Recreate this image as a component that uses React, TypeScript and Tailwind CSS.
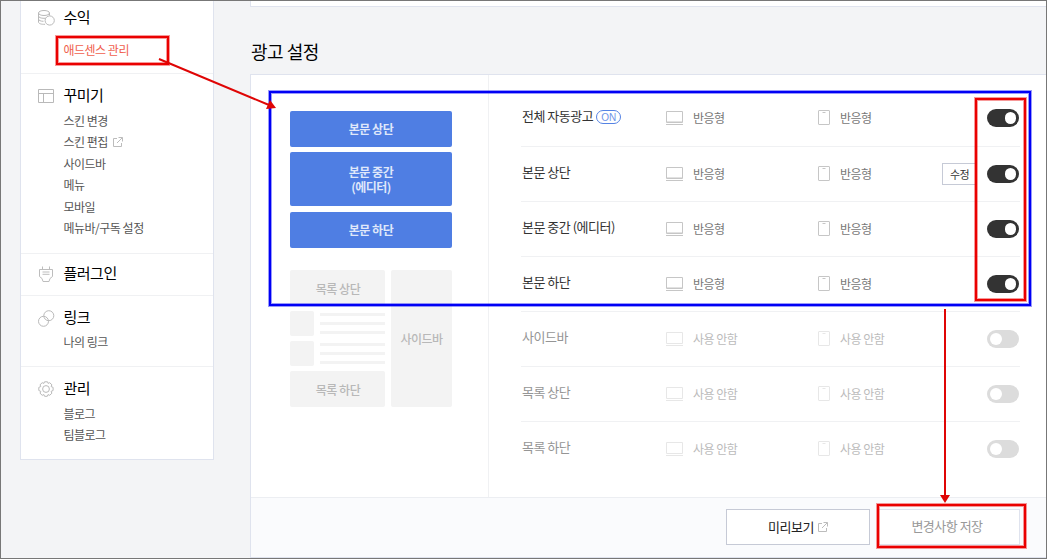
import type { ReactNode } from "react";
import { clsx } from "clsx";

type MenuSection = {
  title: string;
  icon: ReactNode;
  className: string;
  listClassName?: string;
  items: { label: string; active?: boolean; external?: boolean }[];
};

function ExternalIcon() {
  return (
    <svg width="10" height="10" viewBox="0 0 10 10" fill="none" stroke="#bcbcbc">
      <path d="M4 1.5H.5v8h8V6M5.5.5h4v4M9.3.7 4 6" />
    </svg>
  );
}

function CoinsIcon() {
  return (
    <svg width="17" height="16" viewBox="0 0 17 16" fill="none" stroke="#b9b9b9">
      <ellipse cx="6" cy="3" rx="5.5" ry="2.5" />
      <path d="M.5 3v3c0 1.4 2.4 2.3 5.5 2.3 1 0 2-.1 2.8-.3M11.5 3v2.5M.5 6v3c0 1.4 2.2 2.3 5 2.3M.5 9v3c0 1.5 2.6 2.5 6.500 2.3" />
      <circle cx="11.7" cy="10.5" r="4.6" fill="#fff" />
    </svg>
  );
}

function LayoutIcon() {
  return (
    <svg width="17" height="15" viewBox="0 0 17 15" fill="none" stroke="#b9b9b9">
      <path d="M.5.5h15v13H.5zM.5 4.5h15M5.5 4.5v9" />
    </svg>
  );
}

function PlugIcon() {
  return (
    <svg width="17" height="17" viewBox="0 0 17 17" fill="none" stroke="#bdbdbd">
      <path d="M1.500 3.500h13v7l-2.500 2-1 3H5l-1-3-2.500-2zM4.500.5v3M11.500.5v3M4.500 6h7M4.500 8.300h7" />
    </svg>
  );
}

function LinkIcon() {
  return (
    <svg width="17" height="17" viewBox="0 0 17 17" fill="none" stroke="#b9b9b9">
      <circle cx="10.8" cy="5.7" r="5" />
      <circle cx="5.5" cy="11.3" r="5" />
    </svg>
  );
}

function GearIcon() {
  return (
    <svg width="17" height="17" viewBox="0 0 17 17" fill="none" stroke="#b9b9b9">
      <path
        strokeLinejoin="round"
        d="M6.5.8h3l.6 1.600 1.600-.7 2.200 2.100-.8 1.700 2 .9v3.100l-2 .9.8 1.800-2.200 2.100-1.700-.7-.7 1.700H6.600l-.7-1.700-1.700.7L2 12.200l.8-1.800-2-.9V6.400l2-.9L2 3.800l2.200-2.100 1.700.7z"
      />
      <circle cx="8" cy="8" r="3.4" />
    </svg>
  );
}

const MENU: MenuSection[] = [
  {
    title: "수익",
    icon: <CoinsIcon />,
    className: "h-[73px] pt-1.5",
    listClassName: "mt-3",
    items: [{ label: "애드센스 관리", active: true }],
  },
  {
    title: "꾸미기",
    icon: <LayoutIcon />,
    className: "h-[180px] pt-[11px]",
    items: [
      { label: "스킨 변경" },
      { label: "스킨 편집", external: true },
      { label: "사이드바" },
      { label: "메뉴" },
      { label: "모바일" },
      { label: "메뉴바/구독 설정" },
    ],
  },
  { title: "플러그인", icon: <PlugIcon />, className: "h-[42px] pt-[9px]", items: [] },
  {
    title: "링크",
    icon: <LinkIcon />,
    className: "h-[71px] pt-[11px]",
    listClassName: "mt-1",
    items: [{ label: "나의 링크" }],
  },
  {
    title: "관리",
    icon: <GearIcon />,
    className: "h-[92px] pt-[11px]",
    items: [{ label: "블로그" }, { label: "팀블로그" }],
  },
];

const AD_ROWS = [
  { label: "전체 자동광고", on: true, badge: true },
  { label: "본문 상단", on: true, editable: true },
  { label: "본문 중간 (에디터)", on: true },
  { label: "본문 하단", on: true },
  { label: "사이드바", on: false },
  { label: "목록 상단", on: false },
  { label: "목록 하단", on: false },
];

function Sidebar() {
  return (
    <aside className="ml-[19px] h-[459px] w-[194px] shrink-0 border-x border-b border-[#dfe3ee] bg-white">
      {MENU.map((section) => (
        <section
          key={section.title}
          className={clsx("border-b border-[#f0f1f3] last:border-b-0", section.className)}
        >
          <h2 className="flex h-5 items-center text-[15px] text-black">
            <span className="flex w-[42.5px] shrink-0 pt-0.5 pl-[17px]">{section.icon}</span>
            {section.title}
          </h2>
          <ul className={clsx("pl-[42.5px] text-xs text-[#555]", section.listClassName ?? "mt-[5px]")}>
            {section.items.map((item) => (
              <li
                key={item.label}
                className={clsx(
                  "flex h-[21.5px] items-center gap-[5px]",
                  item.active && "text-[#f0604d]"
                )}
              >
                {item.label}
                {item.external && <ExternalIcon />}
              </li>
            ))}
          </ul>
        </section>
      ))}
    </aside>
  );
}

function Lines() {
  return (
    <div className="flex flex-1 flex-col gap-1.5 pt-0.5">
      <div className="h-[3px] bg-[#f3f3f3]" />
      <div className="h-[3px] bg-[#f3f3f3]" />
      <div className="h-[3px] bg-[#f3f3f3]" />
    </div>
  );
}

/** Placement preview: active slots in blue, unused ones in grey. */
function PlacementPreview() {
  return (
    <div className="w-[238px] shrink-0 border-r border-[#f0f1f3] pt-9 pl-[39px] text-xs font-medium">
      <div className="w-[162px] text-center font-bold text-[#dfe7fa]">
        <div className="flex h-9 items-center justify-center rounded-[2px] bg-[#4f7ee3]">본문 상단</div>
        <div className="mt-[5px] flex h-[54px] items-center justify-center rounded-[2px] bg-[#4f7ee3] leading-[15px]">
          본문 중간
          <br />
          (에디터)
        </div>
        <div className="mt-1.5 flex h-9 items-center justify-center rounded-[2px] bg-[#4f7ee3]">본문 하단</div>
      </div>
      <div className="mt-[22px] flex h-[137px] w-[162px] gap-1.5 text-[#b8b8b8]">
        <div className="flex w-[95px] flex-col">
          <div className="flex h-9 items-center justify-center rounded-[2px] bg-[#f3f3f3] pt-0.5 pl-px">목록 상단</div>
          <div className="mt-[5px] flex h-[25px] gap-1.5">
            <div className="w-6 rounded-[2px] bg-[#f3f3f3]" />
            <Lines />
          </div>
          <div className="mt-[5px] flex h-[25px] gap-1.5">
            <div className="w-6 rounded-[2px] bg-[#f3f3f3]" />
            <Lines />
          </div>
          <div className="mt-[5px] flex h-9 items-center justify-center rounded-[2px] bg-[#f3f3f3] pt-0.5 pl-px">목록 하단</div>
        </div>
        <div className="flex w-[61px] items-center justify-center rounded-[2px] bg-[#f3f3f3]">사이드바</div>
      </div>
    </div>
  );
}

function MonitorIcon({ on }: { on: boolean }) {
  return (
    <svg width="17" height="14" viewBox="0 0 17 14" fill="none" stroke={on ? "#c6c6c6" : "#e7e7e7"}>
      <path d="M.5.5h16v11H.5zM0 13.5h17" />
      {on && <path d="M1 10.5h15" stroke="#e2e2e2" />}
    </svg>
  );
}

function PhoneIcon({ on }: { on: boolean }) {
  return (
    <svg width="12" height="16" viewBox="0 0 12 16" fill="none" stroke={on ? "#c6c6c6" : "#e7e7e7"}>
      <rect x=".5" y=".5" width="11" height="14" rx=".5" />
      <path d="M4.500 2.5h3" />
    </svg>
  );
}

function Toggle({ on }: { on: boolean }) {
  return (
    <button
      type="button"
      role="switch"
      aria-checked={on}
      className={clsx(
        "flex h-[18px] w-8 items-center rounded-full",
        on ? "justify-end bg-[#333] pr-[3px]" : "bg-[#dcdcdc] pl-[3px]"
      )}
    >
      <span className="size-[11.5px] rounded-full bg-white" />
    </button>
  );
}

function AdRow({ row }: { row: (typeof AD_ROWS)[number] }) {
  const status = row.on ? "반응형" : "사용 안함";
  return (
    <li
      className={clsx(
        "flex h-[55px] items-center border-b border-[#f0f1f3] last:border-transparent",
        row.badge && "pb-0.5"
      )}
    >
      <div
        className={clsx(
          "flex w-[145px] items-center gap-[3px] pb-1 pl-px text-[13px]",
          row.on ? "text-[#333]" : "text-[#959595]"
        )}
      >
        {row.label}
        {row.badge && (
          <span className="mt-0.5 flex h-3.5 w-[25px] shrink-0 items-center justify-center rounded-full border border-[#5583e4] pt-px font-['Liberation_Sans'] text-[10px] leading-none tracking-normal text-[#6f95e8]">
            ON
          </span>
        )}
      </div>
      <div className={clsx("flex w-[424px] items-center text-xs", row.on ? "text-[#777]" : "text-[#bbb]")}>
        <div className="flex w-[152px] items-center gap-2.5">
          <MonitorIcon on={row.on} />
          {status}
        </div>
        <div className="flex w-[124px] items-center gap-2.5">
          <PhoneIcon on={row.on} />
          {status}
        </div>
        {row.editable && (
          <button
            type="button"
            className="h-[22px] w-[34px] border border-r-0 border-[#c6cad6] bg-white text-[11px] tracking-[-0.5px] text-[#333]"
          >
            수정
          </button>
        )}
      </div>
      <div className="ml-[-103px]">
        <Toggle on={row.on} />
      </div>
    </li>
  );
}

function Annotations() {
  return (
    <svg className="pointer-events-none absolute -inset-px" width="1047" height="559" viewBox="0 0 1047 559" fill="none">
      <g stroke="#0000f5">
        <rect x="270" y="92" width="760" height="213" strokeWidth="4" strokeOpacity=".4" />
        <rect x="270" y="92" width="760" height="213" strokeWidth="2" />
      </g>
      <g stroke="#ea0000" strokeWidth="4" strokeOpacity=".4">
        <rect x="57" y="37" width="111" height="27" />
        <rect x="976" y="99" width="49" height="201" />
        <rect x="878" y="505" width="147" height="42" />
      </g>
      <g stroke="#ea0000" strokeWidth="2">
        <rect x="57" y="37" width="111" height="27" />
        <rect x="976" y="99" width="49" height="201" />
        <rect x="878" y="505" width="147" height="42" />
      </g>
      <path d="M159 59l110 46M945 309v188" stroke="#df0505" strokeWidth="2" />
      <path d="M276 108l-10 1 4-9zM940 495h10l-5 8z" fill="#df0505" />
    </svg>
  );
}

export default function App() {
  return (
    <div className="relative flex h-[559px] w-[1047px] overflow-hidden border border-[#777] bg-[#f3f4f6] font-['Noto_Sans_CJK_KR',sans-serif] tracking-[-0.5px]">
      <Sidebar />
      <main className="ml-9 w-[796px] shrink-0">
        <div className="h-1.5 border-b border-l border-[#dfe3ee] bg-white" />
        <h1 className="flex h-[67px] items-center pt-[21px] pl-px text-lg leading-none text-black">광고 설정</h1>
        <div className="h-[484px] border-y border-l border-[#dfe3ee]">
          <div className="flex h-[422px] bg-white">
            <PlacementPreview />
            <ul className="ml-8 w-[499px] pt-[17px]">
              {AD_ROWS.map((row) => (
                <AdRow key={row.label} row={row} />
              ))}
            </ul>
          </div>
          <div className="flex h-[60px] justify-end gap-2 border-t border-[#eceef2] bg-[#fafbfd] pt-[11px] pr-[26px] text-[13px]">
            <button
              type="button"
              className="flex h-9 w-36 items-center justify-center gap-1 border border-[#c6cad6] bg-white text-[#222]"
            >
              미리보기
              <ExternalIcon />
            </button>
            <button type="button" className="h-9 w-[142px] border border-[#dfe3ee] bg-white pr-1 pb-0.5 text-[#999]">
              변경사항 저장
            </button>
          </div>
        </div>
      </main>
      <Annotations />
    </div>
  );
}
